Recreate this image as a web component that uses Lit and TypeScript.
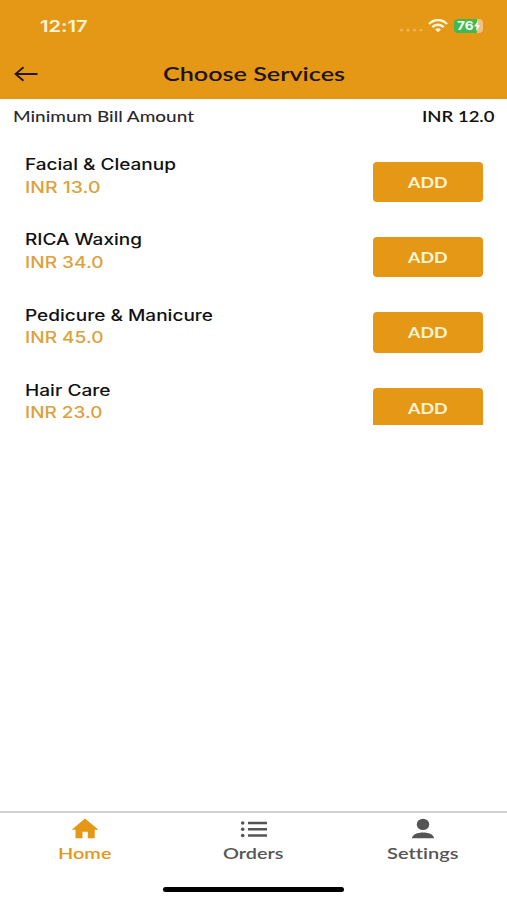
import { LitElement, html, css, svg } from "lit";
import { customElement, property } from "lit/decorators.js";

/** One line of wide-set text, fitted to a given width. */
@customElement("wide-text")
class WideText extends LitElement {
  @property() text = "";
  @property({ type: Number }) width = 100;

  static styles = css`
    :host { display: block; flex: none; height: 22px; }
    .line { display: block; height: 22px; overflow: visible; fill: currentColor; font-variant-ligatures: none; }
  `;

  render() {
    return html`<svg class="line" width=${this.width} height="22">
      ${svg`<text x="0" y="16" textLength=${this.width} lengthAdjust="spacingAndGlyphs">${this.text}</text>`}
    </svg>`;
  }
}

interface Service { name: string; nameWidth: number; price: string; priceWidth: number; }

const services: Service[] = [
  { name: "Facial & Cleanup", nameWidth: 151, price: "INR 13.0", priceWidth: 75.5 },
  { name: "RICA Waxing", nameWidth: 117, price: "INR 34.0", priceWidth: 78.5 },
  { name: "Pedicure & Manicure", nameWidth: 188, price: "INR 45.0", priceWidth: 78.5 },
  { name: "Hair Care", nameWidth: 85.5, price: "INR 23.0", priceWidth: 77.5 },
];

@customElement("app-root")
class AppRoot extends LitElement {
  static styles = css`
    :host {
      display: flex; flex-direction: column; width: 507px; height: 900px;
      overflow: hidden; background: #fff; color: #111;
      font-family: Lato, "Liberation Sans", sans-serif;
    }
    .top { flex: none; height: 98.5px; background: #e59815; }
    .status { display: flex; height: 50px; box-sizing: border-box; padding: 15.5px 24px 0 40px; color: #fff6dc; }
    .clock { font: 600 16.5px Inter, sans-serif; margin-right: auto; }
    .dots { display: block; margin-top: 12px; }
    .wifi { display: block; margin: 3px 0 0 5px; }
    .battery {
      display: flex; align-items: center; justify-content: center; box-sizing: border-box;
      width: 29px; height: 14px; margin: 3px 0 0 6px; border-radius: 4px;
      background: linear-gradient(90deg, #40b950 78%, #eec184 78%);
      color: #fff; font: 700 12px Inter, sans-serif; overflow: hidden;
    }
    .battery wide-text { height: 22px; margin-top: -1px; }
    .bolt { display: block; margin-left: 1px; }
    .bar { display: grid; grid-template-columns: 60px 1fr 60px; height: 48px; }
    .back { margin: 16px 0 0 14px; }
    .title { justify-self: center; margin-top: 15px; font-size: 18.7px; font-weight: 600; color: #20130a; }
    .minimum { display: flex; flex: none; justify-content: space-between; padding: 7.8px 12.7px 0 12.5px; height: 36px; box-sizing: border-box; font-size: 15.3px; }
    .minimum .label { color: #2a2a2a; font-weight: 500; }
    .minimum .value { font-weight: 600; }
    .list { flex: none; height: 290.5px; overflow: hidden; }
    .service { display: flex; justify-content: space-between; height: 75.3px; padding: 19.5px 24.3px 0 25.2px; box-sizing: border-box; font: 500 15.5px Inter, sans-serif; }
    .price { color: #dda13c; margin-top: 0.6px; }
    .add {
      display: flex; justify-content: center; width: 110px; height: 40.5px; margin-top: 7.7px; padding: 10px 0 0; box-sizing: border-box;
      border: 0; border-radius: 4px; background: #e59815; color: #fff4d6; font: 700 15px Lato, sans-serif;
    }
    .tabs { display: grid; flex: none; grid-template-columns: repeat(3, 1fr); margin-top: auto; height: 72px; border-top: 2px solid #d2d2d2; box-sizing: content-box; font-size: 15.3px; font-weight: 600; color: #555; }
    .tab { display: flex; flex-direction: column; align-items: center; padding-top: 4.5px; }
    .tab.active { color: #e59815; }
    .tab wide-text { margin-top: 2.2px; }
    .foot { flex: none; height: 15.5px; display: flex; justify-content: center; }
    .indicator { width: 181px; height: 5px; margin-top: 2.5px; border-radius: 3px; background: #000; }
  `;

  private icon(name: string) {
    switch (name) {
      case "home":
        return html`<svg width="28" height="24" viewBox="0 0 28 24" fill="currentColor"><path d="M14 1.5 L27.5 12.7 H23.7 V21.3 H16.8 V14.7 H11.5 V21.3 H4.5 V12.7 H.7 Z"/></svg>`;
      case "orders":
        return html`<svg width="28" height="24" viewBox="0 0 28 24" fill="currentColor"><circle cx="2.7" cy="6" r="1.8"/><circle cx="2.7" cy="12.2" r="1.8"/><circle cx="2.7" cy="18.5" r="1.8"/><path d="M8 4.8h19v2.4H8zM8 11h19v2.4H8zM8 17.3h19v2.4H8z"/></svg>`;
      default:
        return html`<svg width="28" height="24" viewBox="0 0 28 24" fill="currentColor"><ellipse cx="14" cy="7.4" rx="6.2" ry="5.7"/><path d="M3 21.3 C3 17.5 8.5 15.4 14 15.4 S25 17.5 25 21.3 Z"/></svg>`;
    }
  }

  private tab(name: string, label: string, width: number, active = false) {
    return html`<div class="tab ${active ? "active" : ""}">${this.icon(name)}<wide-text text=${label} width=${width}></wide-text></div>`;
  }

  render() {
    return html`
      <header class="top">
        <div class="status">
          <wide-text class="clock" text="12:17" width="47.5"></wide-text>
          <svg class="dots" width="24" height="4" viewBox="0 0 24 4" fill="#efb252"><circle cx="2.5" cy="2" r="1.6"/><circle cx="9" cy="2" r="1.6"/><circle cx="15.5" cy="2" r="1.6"/><circle cx="22" cy="2" r="1.6"/></svg>
          <svg class="wifi" width="20" height="14" viewBox="0 0 20 14" fill="none" stroke="#fff6dc" stroke-width="2.5"><path d="M1 5 C6 -.2 14 -.2 19 5"/><path d="M4.3 8.2 C7.5 5 12.5 5 15.7 8.2"/><path d="M7 10.4 Q10 8.2 13 10.4 L10 13.2 Z" fill="#fff6dc" stroke="none"/></svg>
          <div class="battery"><wide-text text="76" width="16.5"></wide-text><svg class="bolt" width="6" height="10" viewBox="0 0 6 10" fill="#fff"><path d="M4 0 L0 5.6 H2.6 L2 10 L6 4.2 H3.4 Z"/></svg></div>
        </div>
        <div class="bar">
          <svg class="back" width="25" height="16" viewBox="0 0 25 16" fill="none" stroke="#24160a" stroke-width="1.8"><path d="M23.5 8 H1.5 M9.5 1.2 L1.5 8 L9.5 14.8"/></svg>
          <wide-text class="title" text="Choose Services" width="182"></wide-text>
        </div>
      </header>
      <section class="minimum">
        <wide-text class="label" text="Minimum Bill Amount" width="181"></wide-text>
        <wide-text class="value" text="INR 12.0" width="72.5"></wide-text>
      </section>
      <main class="list">
        ${services.map((s) => html`
          <div class="service">
            <div>
              <wide-text text=${s.name} width=${s.nameWidth}></wide-text>
              <wide-text class="price" text=${s.price} width=${s.priceWidth}></wide-text>
            </div>
            <button class="add"><wide-text text="ADD" width="39.5"></wide-text></button>
          </div>`)}
      </main>
      <nav class="tabs">
        ${this.tab("home", "Home", 53.5, true)}
        ${this.tab("orders", "Orders", 60.5)}
        ${this.tab("settings", "Settings", 71.5)}
      </nav>
      <div class="foot"><div class="indicator"></div></div>
    `;
  }
}
